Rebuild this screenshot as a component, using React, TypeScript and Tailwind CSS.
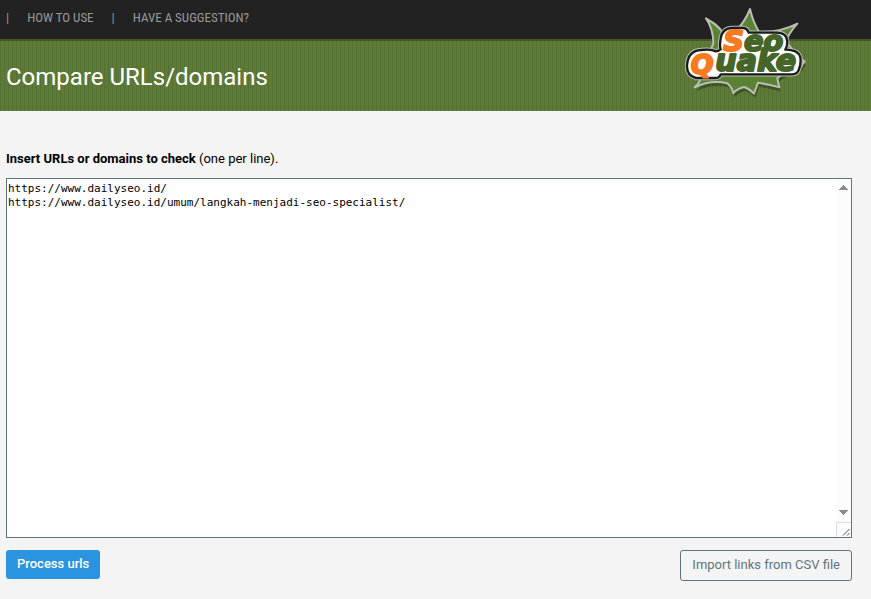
import React, { useState } from 'react';

const DEFAULT_URLS = [
  'https://www.dailyseo.id/',
  'https://www.dailyseo.id/umum/langkah-menjadi-seo-specialist/',
].join('\n');

export default function App() {
  return (
    <div className="relative min-h-screen bg-[#f4f4f4] font-['Roboto',sans-serif] text-black">
      <TopNav />
      <TitleBar title="Compare URLs/domains" />
      <Logo />
      <CompareForm />
    </div>
  );
}

const TopNav = () => (
  <nav className="flex h-[39px] items-center bg-[#222] px-1.5 pb-1 font-['Roboto_Condensed','Liberation_Sans_Narrow',sans-serif] text-[13px] uppercase text-[#999]">
    <span>|</span>
    <a href="#how-to" className="ml-[18px]">How to use</a>
    <span className="ml-[18px]">|</span>
    <a href="#suggestion" className="ml-[18px]">Have a suggestion?</a>
  </nav>
);

const TitleBar = ({ title }: { title: string }) => (
  <header className="h-[72px] border-t-2 border-[#435727] bg-[#5b7936] bg-[repeating-linear-gradient(90deg,#557232_0,#557232_1px,#5d7b37_1px,#5d7b37_4px)] px-1.5 pt-5">
    <h1 className="text-2xl leading-8 text-white">{title}</h1>
  </header>
);

const CompareForm = () => {
  const [urls, setUrls] = useState(DEFAULT_URLS);

  return (
    <form className="pl-1.5 pr-[19px] pt-[38px]" onSubmit={(e) => e.preventDefault()}>
      <label htmlFor="urls" className="block text-[13px] leading-5">
        <b>Insert URLs or domains to check</b> (one per line).
      </label>
      <div className="relative mt-[9px]">
        <textarea
          id="urls"
          rows={25}
          spellCheck={false}
          value={urls}
          onChange={(e) => setUrls(e.target.value)}
          className="block h-[360px] w-full resize-none overflow-hidden border border-[#5f757d] bg-white px-px py-[3px] font-['DejaVu_Sans_Mono',monospace] text-[11px] leading-[14px] outline-none"
        />
        <ScrollTrack />
      </div>
      <div className="mt-3 flex items-start justify-between">
        <button type="submit" className="h-[29px] rounded-[3px] bg-[#2b94e1] px-[11px] pb-0.5 text-[13px] font-medium text-white">
          Process urls
        </button>
        <button type="button" className="h-[31px] rounded-[3px] border border-[#5f757d] px-[11px] pb-0.5 text-[13px] text-[#5f757d]">
          Import links from CSV file
        </button>
      </div>
    </form>
  );
};

const ScrollTrack = () => (
  <div className="pointer-events-none absolute inset-y-px right-px flex w-[15px] flex-col items-center bg-[#fcfcfc]">
    <svg width="9" height="5" viewBox="0 0 9 5" className="mt-1.5" shapeRendering="crispEdges">
      <path d="M0 5h9L4.5 0z" fill="#8b8b8b" />
    </svg>
    <svg width="9" height="5" viewBox="0 0 9 5" className="mb-[7px] mt-auto" shapeRendering="crispEdges">
      <path d="M0 0h9L4.5 5z" fill="#8b8b8b" />
    </svg>
    <svg width="15" height="15" viewBox="0 0 15 15">
      <path d="M.5 15V.5H15" fill="none" stroke="#dcdcdc" />
      <path d="M7 13.5l6.5-6.5M11 13.5l2.5-2.5" fill="none" stroke="#555" />
    </svg>
  </div>
);

const BURST =
  'M108 55C130 68 146 78 158 98L203 86Q224 66 240 27Q250 70 268 96Q330 98 382 71Q358 98 347 124L376 158Q388 164 395 178Q402 182 404 184Q396 190 394 200L340 222Q326 228 322 236L328 262Q300 254 264 248Q258 264 252 281Q238 266 222 261Q202 266 190 279Q186 262 172 250Q124 238 74 262Q92 246 94 226L130 130Q130 86 108 55Z';

// white plate behind the two words
const PLATE =
  'M152 148Q148 138 152 116Q156 86 184 84H218Q232 84 236 98H318Q352 98 352 126Q352 138 346 149Q386 150 391 172Q394 192 386 210Q382 222 366 223H152Q148 234 136 234H78Q50 228 51 196Q54 152 94 150Q122 146 138 154Q144 154 152 148Z';

const Logo = () => (
  <a href="#home" aria-label="SeoQuake" className="absolute right-[51px] top-0">
    <svg width="150" height="110" viewBox="0 0 450 330" strokeLinejoin="round">
      <path d={BURST} transform="translate(4 12)" fill="#1d2b10" opacity=".45" />
      <path d={BURST} fill="#5b8233" stroke="#b9bdb5" strokeWidth="6" />
      <path d={PLATE} fill="none" stroke="#b9bdb5" strokeWidth="13" />
      <path d={PLATE} fill="#fff" stroke="#191d1b" strokeWidth="7" />
      <g className="fill-[#466529] stroke-[#466529] stroke-[6px] font-['DejaVu_Sans',sans-serif] text-[86px] font-bold italic">
        <text x="160" y="153">
          <tspan className="fill-[#f77a20] stroke-[#f77a20]">S</tspan>eo
        </text>
        <text x="62" y="222">
          <tspan className="fill-[#f77a20] stroke-[#f77a20] text-[80px]">Q</tspan>
          <tspan x="136" y="213" className="text-[90px]">uake</tspan>
        </text>
      </g>
    </svg>
  </a>
);
